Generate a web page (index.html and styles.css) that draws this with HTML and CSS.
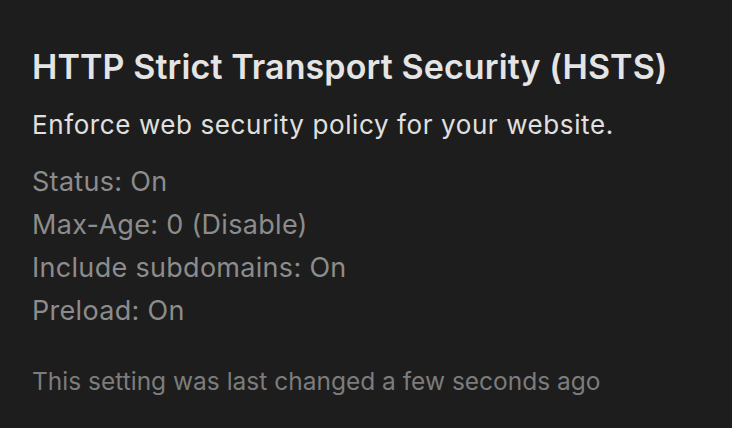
FILE: index.html
```html
<!DOCTYPE html>
<html>
<head>
<meta charset="utf-8">
<link rel="stylesheet" href="styles.css">
</head>
<body>
<section class="card">
  <h1 class="title">HTTP Strict Transport Security (HSTS)</h1>
  <p class="desc">Enforce web security policy for your website.</p>
  <ul class="props">
    <li>Status: On</li>
    <li>Max-Age: 0 (Disable)</li>
    <li>Include subdomains: On</li>
    <li>Preload: On</li>
  </ul>
  <p class="footer">This setting was last changed a few seconds ago</p>
</section>
</body>
</html>
```
FILE: styles.css
```css
html, body {
  margin: 0;
  padding: 0;
  background: #1d1d1d;
}
.card {
  width: 732px;
  height: 428px;
  box-sizing: border-box;
  padding: 47px 32px 0;
  font-family: Inter, "Noto Sans", sans-serif;
}
.title {
  margin: 0;
  font-size: 34px;
  font-weight: 600;
  line-height: 40px;
  letter-spacing: 0.1px;
  color: #e4e4e4;
}
.desc {
  margin: 22px 0 0;
  font-size: 26px;
  line-height: 32px;
  letter-spacing: 0.6px;
  color: #e0e0e0;
}
.props {
  list-style: none;
  margin: 19px 0 0;
  padding: 0;
  font-size: 27px;
  line-height: 43px;
  letter-spacing: 0.3px;
  color: #8c8c8c;
}
.footer {
  margin: 34px 0 0;
  font-size: 24.5px;
  line-height: 30px;
  color: #7c7c7c;
}
```
